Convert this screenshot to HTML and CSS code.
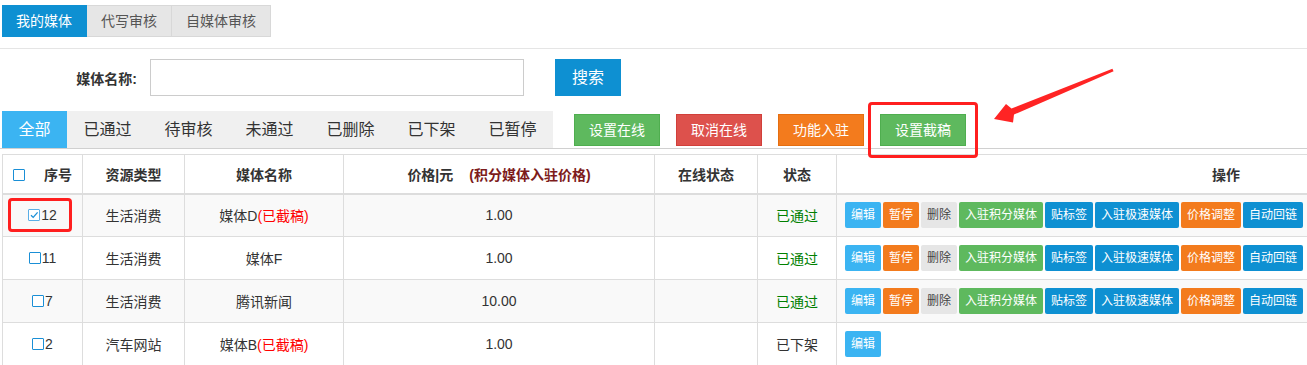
FILE: index.html
```html
<!DOCTYPE html>
<html lang="zh-CN">

<head>
    <meta charset="UTF-8">
    <meta name="viewport" content="width=device-width, initial-scale=1.0">
    <title>我的媒体</title>
    <link rel="stylesheet" href="styles.css">
</head>

<body>
    <!-- 顶部切换 -->
    <div class="nav">
        <a href="javascript:;" class="active">我的媒体</a>
        <a href="javascript:;">代写审核</a>
        <a href="javascript:;">自媒体审核</a>
    </div>

    <!-- 搜索 -->
    <div class="search">
        <label>媒体名称:</label>
        <input type="text">
        <a href="javascript:;" class="search-btn">搜索</a>
    </div>

    <!-- 状态 + 批量操作 -->
    <div class="toolbar">
        <ul class="status">
            <li class="active">全部</li>
            <li>已通过</li>
            <li>待审核</li>
            <li>未通过</li>
            <li>已删除</li>
            <li>已下架</li>
            <li>已暂停</li>
        </ul>
        <div class="actions">
            <a href="javascript:;" class="btn green">设置在线</a>
            <a href="javascript:;" class="btn red">取消在线</a>
            <a href="javascript:;" class="btn orange">功能入驻</a>
            <a href="javascript:;" class="btn green hl">设置截稿</a>
        </div>
    </div>

    <svg class="arrow" viewBox="990 64 128 62" width="128" height="62">
        <polygon fill="#ff2424" points="994,119 1006,104 1011.5,108.6 1112.4,68.8 1113.6,71.2 1014,114.6 1013,122.5"/>
    </svg>

    <table class="list">
        <colgroup>
            <col style="width:80px">
            <col style="width:102px">
            <col style="width:159px">
            <col style="width:311px">
            <col style="width:103px">
            <col style="width:79px">
            <col>
        </colgroup>
        <thead>
            <tr>
                <th class="num-h"><span class="cb"></span>序号</th>
                <th>资源类型</th>
                <th>媒体名称</th>
                <th>价格|元<em>(积分媒体入驻价格)</em></th>
                <th>在线状态</th>
                <th>状态</th>
                <th>操作</th>
            </tr>
        </thead>
        <tbody>
            <tr>
                <td class="num"><span class="mark"></span><span class="cb checked"><svg viewBox="0 0 12 12" width="12" height="12"><path d="M3 6.2 L5.2 8.4 L9.6 3.4" fill="none" stroke="#1a8fd6" stroke-width="1.3"/></svg></span>12</td>
                <td>生活消费</td>
                <td>媒体D<span class="cut">(已截稿)</span></td>
                <td>1.00</td>
                <td></td>
                <td class="ok">已通过</td>
                <td class="ops">
                    <a class="sbtn sky">编辑</a><a class="sbtn orange">暂停</a><a class="sbtn gray">删除</a><a class="sbtn green">入驻积分媒体</a><a class="sbtn blue">贴标签</a><a class="sbtn blue">入驻极速媒体</a><a class="sbtn orange">价格调整</a><a class="sbtn blue">自动回链</a>
                </td>
            </tr>
            <tr>
                <td class="num"><span class="cb"></span>11</td>
                <td>生活消费</td>
                <td>媒体F</td>
                <td>1.00</td>
                <td></td>
                <td class="ok">已通过</td>
                <td class="ops">
                    <a class="sbtn sky">编辑</a><a class="sbtn orange">暂停</a><a class="sbtn gray">删除</a><a class="sbtn green">入驻积分媒体</a><a class="sbtn blue">贴标签</a><a class="sbtn blue">入驻极速媒体</a><a class="sbtn orange">价格调整</a><a class="sbtn blue">自动回链</a>
                </td>
            </tr>
            <tr>
                <td class="num"><span class="cb"></span>7</td>
                <td>生活消费</td>
                <td>腾讯新闻</td>
                <td>10.00</td>
                <td></td>
                <td class="ok">已通过</td>
                <td class="ops">
                    <a class="sbtn sky">编辑</a><a class="sbtn orange">暂停</a><a class="sbtn gray">删除</a><a class="sbtn green">入驻积分媒体</a><a class="sbtn blue">贴标签</a><a class="sbtn blue">入驻极速媒体</a><a class="sbtn orange">价格调整</a><a class="sbtn blue">自动回链</a>
                </td>
            </tr>
            <tr>
                <td class="num"><span class="cb"></span>2</td>
                <td>汽车网站</td>
                <td>媒体B<span class="cut">(已截稿)</span></td>
                <td>1.00</td>
                <td></td>
                <td>已下架</td>
                <td class="ops">
                    <a class="sbtn sky">编辑</a>
                </td>
            </tr>
        </tbody>
    </table>
</body>

</html>
```

FILE: styles.css
```css
* {
    margin: 0;
    padding: 0;
    box-sizing: border-box;
}

ul,
li {
    list-style: none;
}

a {
    text-decoration: none;
}

html,
body {
    overflow: hidden;
}

body {
    position: relative;
    font-family: "Liberation Sans", "Noto Sans CJK SC", sans-serif;
    font-size: 14px;
    color: #333;
    background: #fff;
}

/* 顶部切换 */
.nav {
    display: flex;
    padding: 5px 2px 11px;
    border-bottom: 1px solid #e5e5e5;
}

.nav a {
    height: 32px;
    line-height: 30px;
    padding: 0 14px;
    background: #e6e6e6;
    border: 1px solid #d8d8d8;
    border-left: none;
    color: #555;
}

.nav a.active {
    background: #0e90d2;
    border-color: #0e90d2;
    color: #fff;
}

/* 搜索 */
.search {
    display: flex;
    align-items: center;
    margin-top: 10px;
    height: 37px;
}

.search label {
    width: 137px;
    text-align: right;
    font-weight: bold;
}

.search input {
    width: 374px;
    height: 37px;
    margin-left: 13px;
    border: 1px solid #ccc;
    outline: none;
}

.search-btn {
    width: 66px;
    height: 37px;
    margin-left: 31px;
    line-height: 37px;
    text-align: center;
    font-size: 16px;
    color: #fff;
    background: #0e90d2;
}

/* 状态 + 批量操作 */
.toolbar {
    display: flex;
    align-items: center;
    margin-top: 15px;
    border-bottom: 1px solid #d0d0d0;
}

.status {
    display: flex;
    margin-left: 2px;
    background: #f0f0f0;
}

.status li {
    height: 37px;
    line-height: 37px;
    padding: 0 16.5px;
    font-size: 16px;
    color: #333;
}

.status li.active {
    background: #3bb4f2;
    color: #fff;
}

.actions {
    display: flex;
    gap: 16px;
    margin-left: 21px;
}

.btn {
    position: relative;
    width: 86px;
    height: 32px;
    line-height: 30px;
    text-align: center;
    color: #fff;
    border: 1px solid;
}

.btn.green {
    background: #5eb95e;
    border-color: #4fae4f;
}

.btn.red {
    background: #dd514c;
    border-color: #d13f3a;
}

.btn.orange {
    background: #f37b1d;
    border-color: #e56e10;
}

.btn.hl::after {
    content: "";
    position: absolute;
    left: -13px;
    top: -13px;
    right: -13px;
    bottom: -13px;
    border: 3px solid #ff1f1f;
    border-radius: 4px;
}

.arrow {
    position: absolute;
    left: 990px;
    top: 64px;
}

/* 列表 */
.list {
    width: 1614px;
    margin: 5px 0 0 2px;
    border-collapse: collapse;
    border: 1px solid #ddd;
}

.list th,
.list td {
    border: 1px solid #ddd;
    text-align: center;
    white-space: nowrap;
}

.list th {
    height: 39px;
    font-weight: bold;
    border-bottom: 2px solid #ddd;
}

.list th em {
    font-style: normal;
    color: #7d1b1b;
    margin-left: 16px;
}

.list td {
    height: 43px;
}

.list tbody tr:nth-child(odd) {
    background: #f9f9f9;
}

.num-h .cb {
    margin-right: 19px;
}

.cb {
    display: inline-block;
    width: 12px;
    height: 12px;
    margin-right: 1px;
    vertical-align: -1px;
    border: 1.5px solid #1a8fd6;
    border-radius: 1px;
    background: #fff;
}

.cb.checked {
    border-color: #5aaee6;
    position: relative;
}

.cb.checked svg {
    position: absolute;
    left: -1.5px;
    top: -1.5px;
}

.num {
    position: relative;
}

.mark {
    position: absolute;
    left: 5px;
    top: 3px;
    width: 64px;
    height: 34px;
    border: 3px solid #ff1f1f;
    border-radius: 4px;
}

.cut {
    color: #f00;
}

.ok {
    color: #008000;
}

.ops {
    padding-left: 8px;
}

.list td.ops {
    text-align: left;
}

.sbtn {
    display: inline-block;
    height: 26px;
    line-height: 26px;
    padding: 0 6px;
    margin-right: 2px;
    font-size: 12px;
    color: #fff;
    border-radius: 2px;
    vertical-align: middle;
}

.sbtn.sky {
    background: #3bb4f2;
}

.sbtn.orange {
    background: #f37b1d;
}

.sbtn.gray {
    background: #e6e6e6;
    color: #444;
}

.sbtn.green {
    background: #5eb95e;
}

.sbtn.blue {
    background: #0e90d2;
}
```
